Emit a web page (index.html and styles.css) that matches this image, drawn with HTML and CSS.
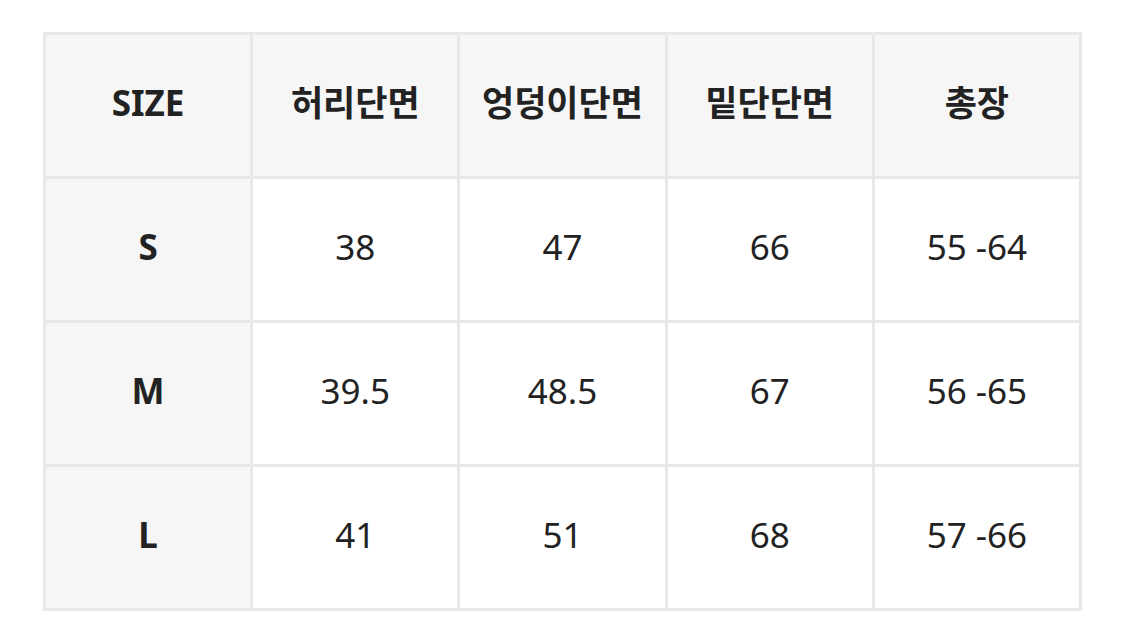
FILE: index.html
```html
<!DOCTYPE html>
<html lang="ko">
<head>
<meta charset="utf-8">
<link rel="stylesheet" href="styles.css">
</head>
<body>
<div class="page">
<table class="size-table">
  <tr class="head">
    <th>SIZE</th><th>허리단면</th><th>엉덩이단면</th><th>밑단단면</th><th>총장</th>
  </tr>
  <tr><th>S</th><td>38</td><td>47</td><td>66</td><td>55 -64</td></tr>
  <tr><th>M</th><td>39.5</td><td>48.5</td><td>67</td><td>56 -65</td></tr>
  <tr><th>L</th><td>41</td><td>51</td><td>68</td><td>57 -66</td></tr>
</table>
</div>
</body>
</html>
```
FILE: styles.css
```css
html, body {
  margin: 0;
  padding: 0;
  background: #ffffff;
}
.page {
  padding: 32px 0 0 43px;
}
.size-table {
  border-collapse: collapse;
  table-layout: fixed;
  width: 1039px;
  font-family: "Noto Sans", "Noto Sans CJK KR", sans-serif;
  color: #222222;
}
.size-table th,
.size-table td {
  border: 3px solid #e8e8e8;
  height: 136px;
  padding: 0 0 5px 0;
  text-align: center;
  vertical-align: middle;
  font-size: 35px;
  line-height: 40px;
}
.size-table th {
  font-weight: 700;
  background: #f6f6f6;
}
.size-table td {
  font-weight: 400;
  background: #ffffff;
}
```
